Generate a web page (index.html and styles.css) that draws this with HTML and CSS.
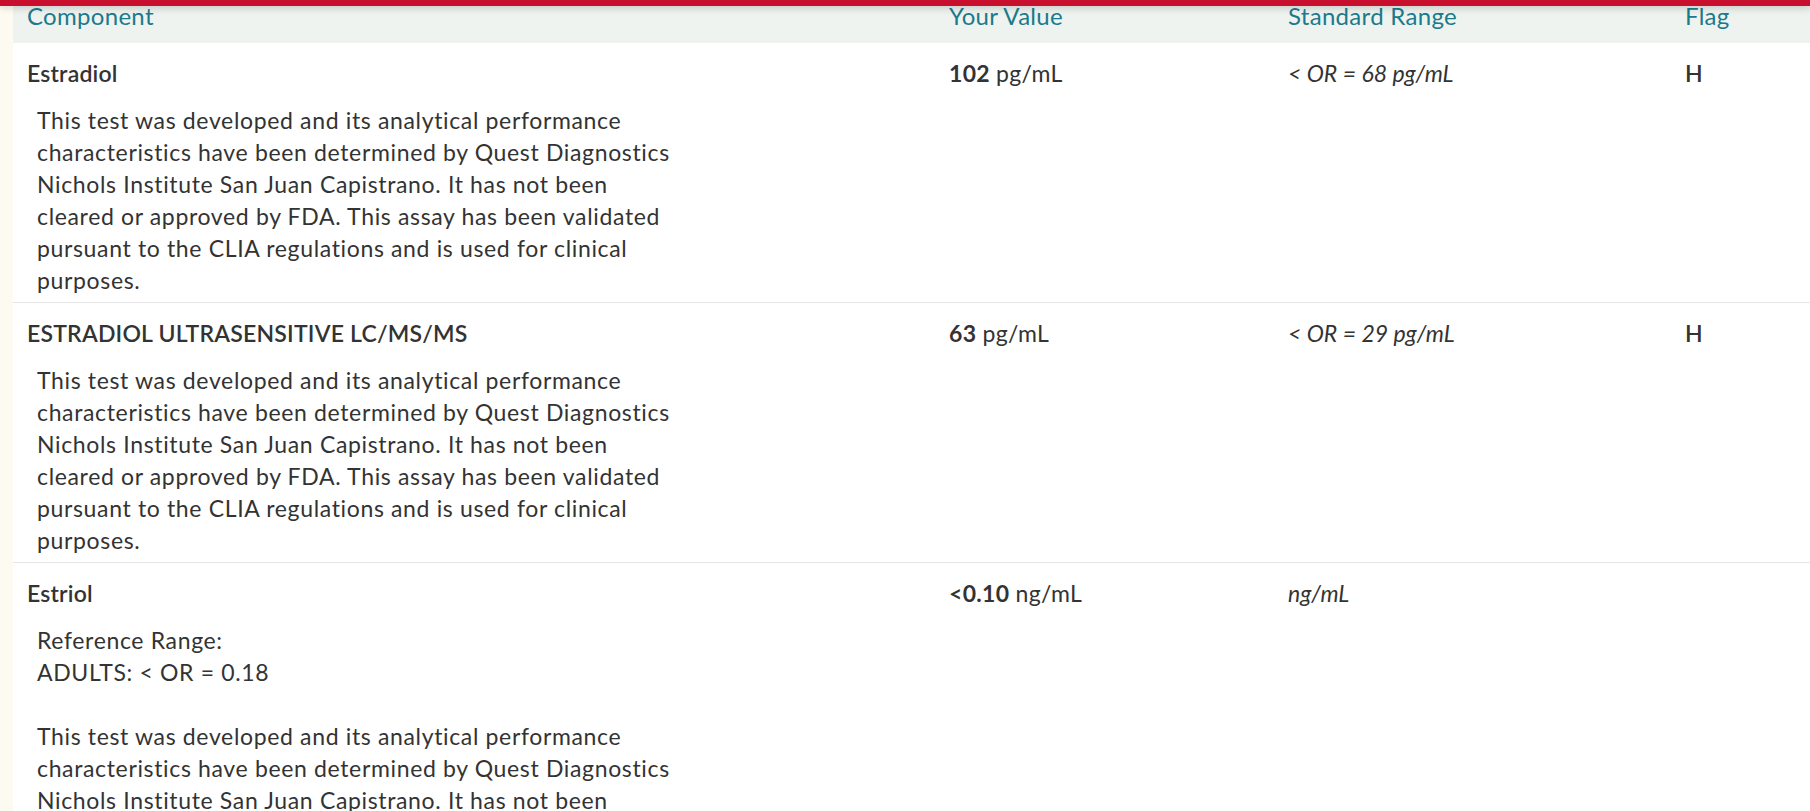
FILE: index.html
```html
<!DOCTYPE html>
<html>

<head>
    <title>Test Results</title>
    <link rel="stylesheet" href="styles.css">
</head>

<body>
    <div class="topbar"></div>
    <div class="page">
        <div class="results">
            <div class="results-head">
                <div class="cell">Component</div>
                <div class="cell">Your Value</div>
                <div class="cell">Standard Range</div>
                <div class="cell">Flag</div>
            </div>

            <div class="result-row">
                <div class="cell">
                    <div class="name">Estradiol</div>
                    <div class="note">This test was developed and its analytical performance
characteristics have been determined by Quest Diagnostics
Nichols Institute San Juan Capistrano. It has not been
cleared or approved by FDA. This assay has been validated
pursuant to the CLIA regulations and is used for clinical
purposes.</div>
                </div>
                <div class="cell value"><b>102</b> pg/mL</div>
                <div class="cell range">&lt; OR = 68 pg/mL</div>
                <div class="cell flag">H</div>
            </div>

            <div class="result-row">
                <div class="cell">
                    <div class="name">ESTRADIOL ULTRASENSITIVE LC/MS/MS</div>
                    <div class="note">This test was developed and its analytical performance
characteristics have been determined by Quest Diagnostics
Nichols Institute San Juan Capistrano. It has not been
cleared or approved by FDA. This assay has been validated
pursuant to the CLIA regulations and is used for clinical
purposes.</div>
                </div>
                <div class="cell value"><b>63</b> pg/mL</div>
                <div class="cell range">&lt; OR = 29 pg/mL</div>
                <div class="cell flag">H</div>
            </div>

            <div class="result-row">
                <div class="cell">
                    <div class="name">Estriol</div>
                    <div class="note">Reference Range:
ADULTS: &lt; OR = 0.18

This test was developed and its analytical performance
characteristics have been determined by Quest Diagnostics
Nichols Institute San Juan Capistrano. It has not been
cleared or approved by FDA. This assay has been validated
pursuant to the CLIA regulations and is used for clinical
purposes.</div>
                </div>
                <div class="cell value"><b>&lt;0.10</b> ng/mL</div>
                <div class="cell range">ng/mL</div>
                <div class="cell flag"></div>
            </div>
        </div>
    </div>
</body>

</html>
```

FILE: styles.css
```css
body {
    margin: 0;
    font-family: Lato, "Open Sans", sans-serif;
    font-size: 23px;
    color: #333;
    background-color: #fdfbf1;
    overflow: hidden;
}

.topbar {
    height: 6px;
    background-color: #c8102e;
    box-shadow: 0 2px 6px rgba(0, 0, 0, 0.15);
    position: relative;
}

.page {
    padding-left: 13px;
}

.results {
    background-color: white;
}

.results-head,
.result-row {
    display: grid;
    grid-template-columns: 922px 339px 397px 1fr;
}

.cell {
    padding-left: 14px;
}

.results-head {
    height: 37px;
    background: linear-gradient(#e9edea, #eef3ef 30%);
    color: #1b7a8c;
    font-size: 24px;
    line-height: 20px;
    letter-spacing: 0.3px;
}

.result-row {
    padding: 14px 0 6px;
    border-bottom: 1px solid #e6e6e6;
    line-height: 32px;
}

.name {
    font-weight: 600;
    letter-spacing: 0.2px;
}

.note {
    margin-top: 15px;
    padding-left: 10px;
    white-space: pre-line;
    letter-spacing: 0.65px;
}

.value {
    letter-spacing: 0.3px;
}

.value b {
    font-weight: 700;
}

.range {
    font-style: italic;
}

.flag {
    font-weight: 600;
}
```
